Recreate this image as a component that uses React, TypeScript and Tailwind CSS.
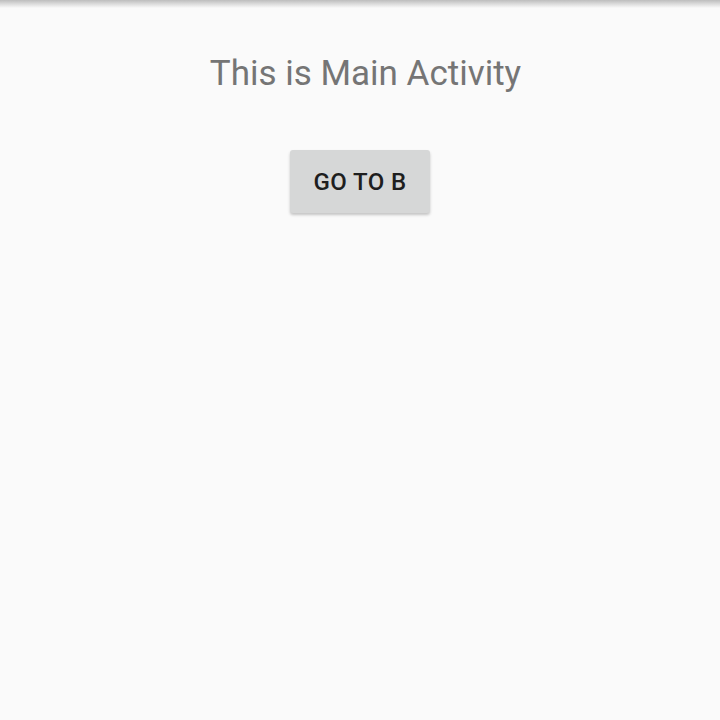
export default function App() {
  return (
    <div className="relative w-[720px] h-[720px] bg-[#fafafa] overflow-hidden" style={{ fontFamily: 'Roboto, "Noto Sans", sans-serif' }}>
      <div className="absolute top-0 left-0 right-0 h-[8px] bg-gradient-to-b from-[#bdbdbd] to-[#fafafa00]" />
      <div className="flex flex-col items-center pt-[53px]">
        <div className="pl-[11px] text-[35px] leading-[42px] text-[#757575]">This is Main Activity</div>
        <button className="mt-[55px] w-[140px] h-[63px] rounded-[3px] bg-[#d6d7d7] text-[24px] font-medium tracking-[0.4px] text-[#1e1e1e] shadow-[0_2px_3px_rgba(0,0,0,0.22)]">
          GO TO B
        </button>
      </div>
    </div>
  );
}
